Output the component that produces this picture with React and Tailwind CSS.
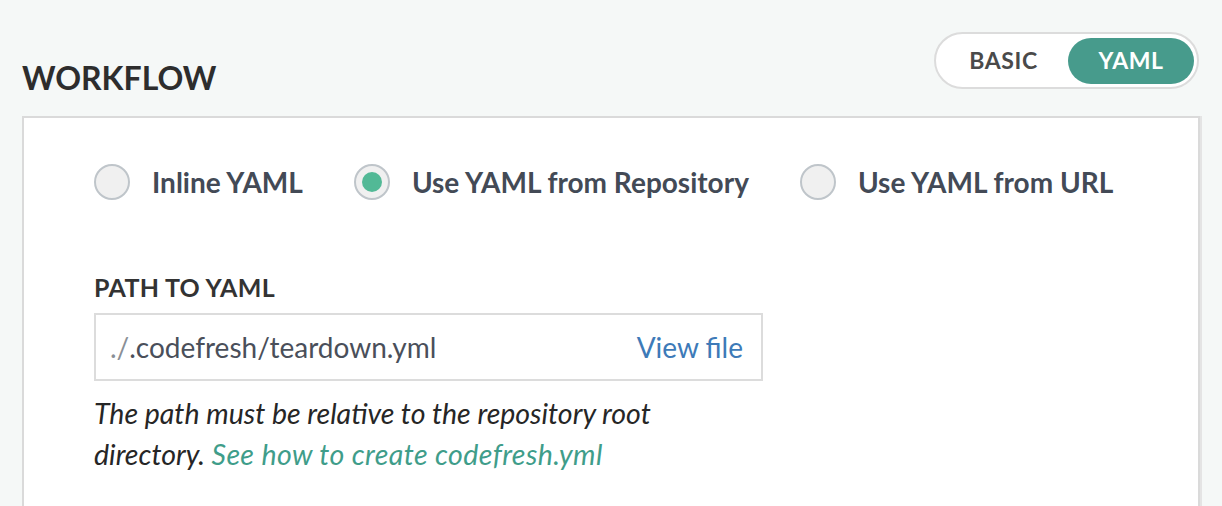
import { useState } from "react";

const font = { fontFamily: "Lato, 'Noto Sans', sans-serif" };

const options = [
  { id: "inline", label: "Inline YAML" },
  { id: "repo", label: "Use YAML from Repository" },
  { id: "url", label: "Use YAML from URL" },
];

function Radio({ checked, label, onClick }) {
  return (
    <button type="button" onClick={onClick} className="flex items-center gap-[22px]">
      <span className="flex h-[36px] w-[36px] items-center justify-center rounded-full border-2 border-[#bfc5ca] bg-[#f0f0f0]">
        {checked && <span className="h-[20px] w-[20px] rounded-full bg-[#52b996]" />}
      </span>
      <span className="text-[28px] font-bold leading-[36px] text-[#434a56]">{label}</span>
    </button>
  );
}

export default function App() {
  const [mode, setMode] = useState("yaml");
  const [source, setSource] = useState("repo");

  return (
    <div style={font} className="h-[506px] overflow-hidden bg-[#f5f8f7]">
      <div className="flex h-[116px] items-start justify-between pl-[22px] pr-[23px] pt-[32px]">
        <h1 className="mt-[26px] text-[32px] font-bold leading-[40px] text-[#2d2d2d]">WORKFLOW</h1>
        <div className="flex h-[57px] w-[265px] items-center rounded-full border-2 border-[#dcdcdc] bg-white p-[3px]">
          <button
            type="button"
            onClick={() => setMode("basic")}
            className={`flex h-[46px] flex-1 items-center justify-center rounded-full text-[23px] font-bold tracking-[0.6px] ${
              mode === "basic" ? "bg-[#479b8c] text-white" : "text-[#4a4a4a]"
            }`}
          >
            BASIC
          </button>
          <button
            type="button"
            onClick={() => setMode("yaml")}
            className={`flex h-[46px] w-[126px] items-center justify-center rounded-full text-[23px] font-bold tracking-[0.6px] ${
              mode === "yaml" ? "bg-[#479b8c] text-white" : "text-[#4a4a4a]"
            }`}
          >
            YAML
          </button>
        </div>
      </div>

      <div className="ml-[22px] h-[400px] w-[1178px] border-2 border-b-0 border-[#dadada] bg-white pl-[70px] pt-[46px] shadow-[2px_0_0_#e4e4e4]">
        <div className="flex items-center gap-[51px]">
          {options.map((o) => (
            <Radio key={o.id} label={o.label} checked={source === o.id} onClick={() => setSource(o.id)} />
          ))}
        </div>

        <div className="mt-[72px] text-[25px] font-bold leading-[30px] tracking-[0.3px] text-[#333]">PATH TO YAML</div>

        <div className="mt-[11px] flex h-[68px] w-[669px] items-center justify-between border-2 border-[#dcdcdc] bg-white pl-[14px] pr-[18px]">
          <span className="text-[28px] text-[#4a4f5a]">
            <span className="text-[#8a8f96]">./</span>.codefresh/teardown.yml
          </span>
          <a href="#" className="text-[28px] text-[#3d7ab8]">View file</a>
        </div>

        <p className="mt-[12px] w-[640px] text-[28.5px] italic leading-[41px] text-[#262626]">
          The path must be relative to the repository root
          <br />
          directory. <a href="#" className="tracking-[0.4px] text-[#3f9d8a]">See how to create codefresh.yml</a>
        </p>
      </div>
    </div>
  );
}
